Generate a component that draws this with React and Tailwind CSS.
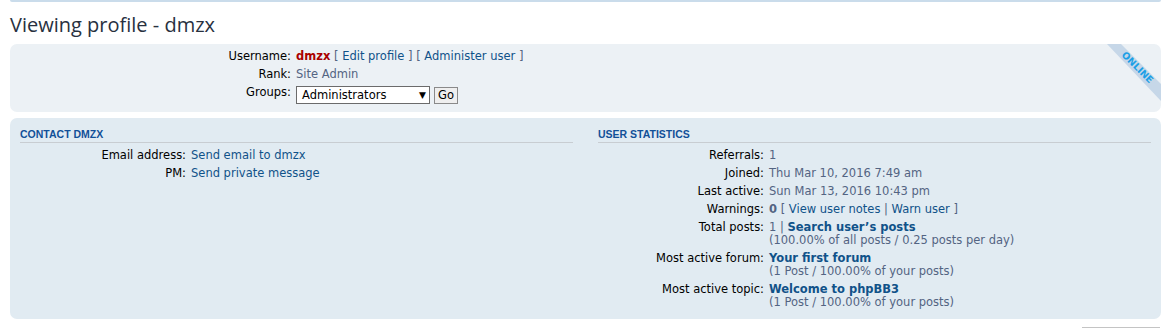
import React from 'react';

const font = { fontFamily: '"DejaVu Sans", Verdana, sans-serif' };

const Row = ({ label, labelWidth, children }) => (
  <div className="flex">
    <div className="shrink-0 text-right text-black leading-[13px]" style={{ width: labelWidth }}>
      {label}
    </div>
    <div className="pl-[5px] leading-[13px] text-[#536482]">{children}</div>
  </div>
);

const Link = ({ children, bold }) => (
  <span className={`text-[#105289] ${bold ? 'font-bold' : ''}`}>{children}</span>
);

const OnlineRibbon = () => (
  <svg className="absolute top-0 right-0" width="57" height="57" viewBox="0 0 57 57">
    <polygon points="3,0 17,0 57,40 57,57" fill="#c6d7e8" />
    <text
      x="33"
      y="24"
      fill="#1a9fe6"
      fontSize="9.5"
      fontWeight="bold"
      fontFamily="DejaVu Sans, Verdana, sans-serif"
      textAnchor="middle"
      dominantBaseline="middle"
      transform="rotate(45 33 24)"
    >
      ONLINE
    </text>
  </svg>
);

const SectionHeader = ({ children }) => (
  <h3 className="text-[10.5px] font-bold uppercase text-[#115098] leading-[14px] pb-[1px] border-b border-[#c8cdd2]" style={{ fontFamily: '"Liberation Sans", Arial, sans-serif' }}>
    {children}
  </h3>
);

export default function App() {
  return (
    <div className="w-[1171px] h-[328px] bg-white px-[10px] overflow-hidden text-[11.5px]" style={font}>
      <div className="h-[2px] bg-[#cadceb] rounded-b-[2px]" />

      <h2 className="mt-[11px] mb-[7px] text-[20px] leading-[24px] text-[#28313f]" style={{ fontFamily: '"Open Sans", sans-serif' }}>
        Viewing profile - dmzx
      </h2>

      <div className="relative overflow-hidden rounded-[7px] bg-[#ecf1f5] px-[10px] pt-[6px] pb-[8px]">
        <OnlineRibbon />
        <div className="flex flex-col gap-[5px]">
          <Row label="Username:" labelWidth={271}>
            <span className="font-bold text-[#aa0000]">dmzx</span> [ <Link>Edit profile</Link> ] [ <Link>Administer user</Link> ]
          </Row>
          <Row label="Rank:" labelWidth={271}>Site Admin</Row>
          <div className="flex">
            <div className="w-[271px] shrink-0 text-right text-black leading-[13px]">Groups:</div>
            <div className="pl-[5px] flex items-center gap-[4px] h-[18px]">
              <div className="w-[134px] h-[18px] border border-[#6b6b6b] bg-white flex items-center justify-between pl-[5px] pr-[3px] text-[#000]">
                <span className="leading-[13px]">Administrators</span>
                <span className="text-[9px] leading-none">▼</span>
              </div>
              <button className="h-[17px] w-[24px] border border-[#8a8a8a] bg-[#efefef] text-black leading-[13px] text-[11.5px]">Go</button>
            </div>
          </div>
        </div>
      </div>

      <div className="mt-[6px] rounded-[7px] bg-[#e1ebf2] px-[10px] pt-[9px] pb-[10px]">
        <div className="grid grid-cols-2 gap-x-[25px]">
          <div>
            <SectionHeader>Contact dmzx</SectionHeader>
            <div className="mt-[6px] flex flex-col gap-[5px]">
              <Row label="Email address:" labelWidth={166}><Link>Send email to dmzx</Link></Row>
              <Row label="PM:" labelWidth={166}><Link>Send private message</Link></Row>
            </div>
          </div>
          <div>
            <SectionHeader>User statistics</SectionHeader>
            <div className="mt-[6px] flex flex-col gap-[5px]">
              <Row label="Referrals:" labelWidth={166}>1</Row>
              <Row label="Joined:" labelWidth={166}>Thu Mar 10, 2016 7:49 am</Row>
              <Row label="Last active:" labelWidth={166}>Sun Mar 13, 2016 10:43 pm</Row>
              <Row label="Warnings:" labelWidth={166}>
                <span className="font-bold">0</span> [ <Link>View user notes</Link> | <Link>Warn user</Link> ]
              </Row>
              <Row label="Total posts:" labelWidth={166}>
                1 | <Link bold>Search user’s posts</Link>
                <br />
                (100.00% of all posts / 0.25 posts per day)
              </Row>
              <Row label="Most active forum:" labelWidth={166}>
                <Link bold>Your first forum</Link>
                <br />
                (1 Post / 100.00% of your posts)
              </Row>
              <Row label="Most active topic:" labelWidth={166}>
                <Link bold>Welcome to phpBB3</Link>
                <br />
                (1 Post / 100.00% of your posts)
              </Row>
            </div>
          </div>
        </div>
      </div>

      <div className="mt-[8px] flex justify-end pr-[1px]">
        <div className="w-[78px] h-[6px] border-t-2 border-[#c4c4c4]" />
      </div>
    </div>
  );
}
